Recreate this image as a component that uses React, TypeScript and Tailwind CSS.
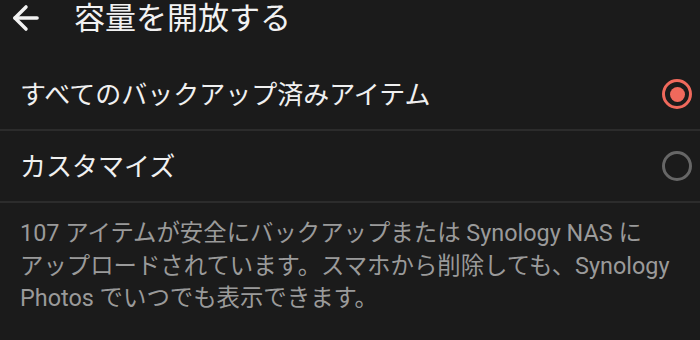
import { ArrowLeft } from 'lucide-react';

const font = { fontFamily: 'Roboto, "Noto Sans CJK JP", sans-serif' };

function Radio({ checked }: { checked: boolean }) {
  if (checked) {
    return (
      <div className="w-[30px] h-[30px] rounded-full border-[3px] border-[#f0695c] flex items-center justify-center">
        <div className="w-[15px] h-[15px] rounded-full bg-[#f0695c]" />
      </div>
    );
  }
  return <div className="w-[30px] h-[30px] rounded-full border-[3px] border-[#666666]" />;
}

export default function App() {
  return (
    <div className="w-[700px] h-[340px] bg-[#1b1b1b] overflow-hidden" style={font}>
      {/* ヘッダー */}
      <div className="h-[36px] flex items-center">
        <ArrowLeft className="ml-[7px] w-[38px] h-[38px] text-[#f2f2f2]" strokeWidth={2.2} />
        <h1 className="ml-[29px] text-[31px] leading-none text-[#f2f2f2]">容量を開放する</h1>
      </div>

      <div className="mt-[23px]">
        <div className="h-[72px] flex items-center justify-between pl-[20px] pr-[8px] border-b-2 border-[#2c2c2c]">
          <span className="text-[26px] text-[#f0f0f0] pt-[3px]">すべてのバックアップ済みアイテム</span>
          <Radio checked />
        </div>
        <div className="h-[72px] flex items-center justify-between pl-[20px] pr-[8px] border-b-2 border-[#2c2c2c]">
          <span className="text-[26px] text-[#f0f0f0] pt-[3px]">カスタマイズ</span>
          <Radio checked={false} />
        </div>
      </div>

      <p className="pt-[14px] pl-[20px] pr-[10px] text-[23.4px] leading-[32.5px] text-[#9a9a9a] whitespace-nowrap">
        107 アイテムが安全にバックアップまたは Synology NAS に
        <br />
        アップロードされています。スマホから削除しても、Synology
        <br />
        Photos でいつでも表示できます。
      </p>
    </div>
  );
}
